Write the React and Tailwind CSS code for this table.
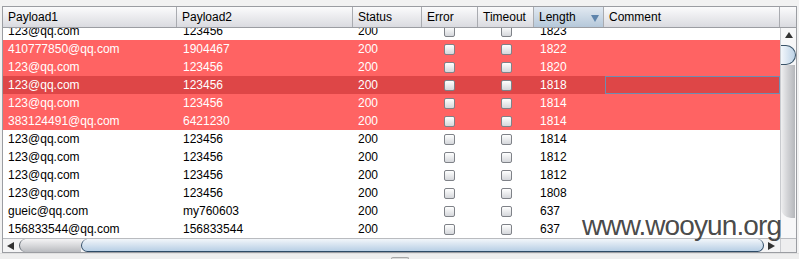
import React from "react";

const COLS = "grid-cols-[174px_176px_69px_56px_56px_70px_176px]";

const rows = [
  { p1: "123@qq.com", p2: "123456", len: "1823", tone: "white" },
  { p1: "410777850@qq.com", p2: "1904467", len: "1822", tone: "red" },
  { p1: "123@qq.com", p2: "123456", len: "1820", tone: "red" },
  { p1: "123@qq.com", p2: "123456", len: "1818", tone: "sel" },
  { p1: "123@qq.com", p2: "123456", len: "1814", tone: "red" },
  { p1: "383124491@qq.com", p2: "6421230", len: "1814", tone: "red" },
  { p1: "123@qq.com", p2: "123456", len: "1814", tone: "white" },
  { p1: "123@qq.com", p2: "123456", len: "1812", tone: "white" },
  { p1: "123@qq.com", p2: "123456", len: "1812", tone: "white" },
  { p1: "123@qq.com", p2: "123456", len: "1808", tone: "white" },
  { p1: "gueic@qq.com", p2: "my760603", len: "637", tone: "white" },
  { p1: "156833544@qq.com", p2: "156833544", len: "637", tone: "white" },
];

const toneClass = {
  white: "bg-white text-black",
  red: "bg-[#ff6363] text-white",
  sel: "bg-[#de4647] text-white",
};

function Check() {
  return (
    <div className="h-[11px] w-[11px] rounded-[2px] border border-[#7f8288] bg-gradient-to-b from-white to-[#d5d7db]" />
  );
}

function HeadCell({ label, sorted }) {
  return (
    <div
      className={
        "relative flex h-full items-center border-r border-[#a9abb0] pl-[5px] " +
        (sorted
          ? "bg-gradient-to-b from-[#e2e9f1] to-[#b5c8da]"
          : "bg-gradient-to-b from-[#fbfbfc] to-[#dadbe0]")
      }
    >
      <span>{label}</span>
      {sorted && (
        <span className="absolute right-[4px] top-[8px] h-0 w-0 border-x-[4px] border-t-[7px] border-x-transparent border-t-[#5e84ac]" />
      )}
    </div>
  );
}

export default function App() {
  return (
    <div
      className="relative h-[259px] w-[799px] overflow-hidden bg-[#f2f2f2] text-[12px]"
      style={{ fontFamily: '"Liberation Sans", Arial, sans-serif' }}
    >
      <div className="pt-[6px] pl-[2px]">
        <div className="w-[795px] border border-[#9b9da2] bg-white">
          {/* header */}
          <div className="flex h-[21px] border-b border-[#9b9da2] text-black">
            <div className={`grid h-full w-[777px] ${COLS}`}>
              <HeadCell label="Payload1" />
              <HeadCell label="Payload2" />
              <HeadCell label="Status" />
              <HeadCell label="Error" />
              <HeadCell label="Timeout" />
              <HeadCell label="Length" sorted />
              <HeadCell label="Comment" />
            </div>
            <div className="h-full w-[16px] bg-gradient-to-b from-[#fbfbfc] to-[#dadbe0]" />
          </div>

          {/* body */}
          <div className="flex h-[210px]">
            <div className="h-full w-[777px] overflow-hidden">
              <div className="-mt-[6px]">
                {rows.map((r, i) => (
                  <div key={i} className={`grid h-[18px] ${COLS} leading-[18px] ${toneClass[r.tone]}`}>
                    <div className="pl-[5px]">{r.p1}</div>
                    <div className="pl-[6px]">{r.p2}</div>
                    <div className="pl-[5px]">200</div>
                    <div className="flex items-center justify-center pr-[1px]"><Check /></div>
                    <div className="flex items-center justify-center"><Check /></div>
                    <div className="pl-[6px]">{r.len}</div>
                    <div className="p-0">
                      {r.tone === "sel" && (
                        <div className="ml-[1px] h-[18px] w-[175px] border border-[#6e8db0]" />
                      )}
                    </div>
                  </div>
                ))}
              </div>
            </div>
            {/* vertical scrollbar */}
            <div className="flex h-full w-[16px] flex-col items-center border-l border-[#c9cbcf] bg-[#f7f7f8]">
              <div className="mt-[4px] h-0 w-0 border-x-[4px] border-b-[6px] border-x-transparent border-b-[#333]" />
              <div className="mt-[7px] h-[20px] w-[15px] self-start rounded-r-full border border-l-0 border-[#3a5368] bg-gradient-to-r from-[#f3f7fb] to-[#bcd2e6]" />
              <div className="h-[153px] w-[14px] self-start rounded-bl-[10px] bg-gradient-to-r from-[#efeff0] via-[#d0d1d4] to-[#b5b7bb]" />
            </div>
          </div>

          {/* horizontal scrollbar */}
          <div className="flex h-[14px] border-t border-[#b9bbbf]">
            <div className="flex h-full w-[777px] items-center bg-[#f4f4f5]">
              <div className="ml-[4px] h-0 w-0 border-y-[4px] border-r-[7px] border-y-transparent border-r-[#333]" />
              <div className="ml-[5px] h-full w-[62px] rounded-l-[8px] border-l border-[#59606a] bg-gradient-to-b from-[#f4f4f5] via-[#d7d8db] to-[#b9bbbf]" />
              <div className="h-full w-[683px] rounded-[8px] border border-t-0 border-[#2e4b66] bg-gradient-to-b from-[#f2f6fa] to-[#b8cfe5]" />
              <div className="ml-[4px] h-0 w-0 border-y-[4px] border-l-[7px] border-y-transparent border-l-[#333]" />
            </div>
            <div className="h-full w-[16px] border-l border-[#c9cbcf] bg-[#eeeeef]" />
          </div>
        </div>
      </div>

      {/* bottom strip */}
      <div className="flex h-[7px] justify-center border-t border-[#e0e0e0] bg-[#eeeeee]">
        <div className="mt-[3px] h-[4px] w-[18px] rounded-t-[2px] border border-b-0 border-[#a6a6a6] bg-[#dcdcdc]" />
      </div>

      {/* watermark */}
      <div className="absolute left-[582px] top-[210px] text-[28px] leading-[32px] tracking-[-0.9px] text-[#333333]/90">
        www.wooyun.org
      </div>
    </div>
  );
}
